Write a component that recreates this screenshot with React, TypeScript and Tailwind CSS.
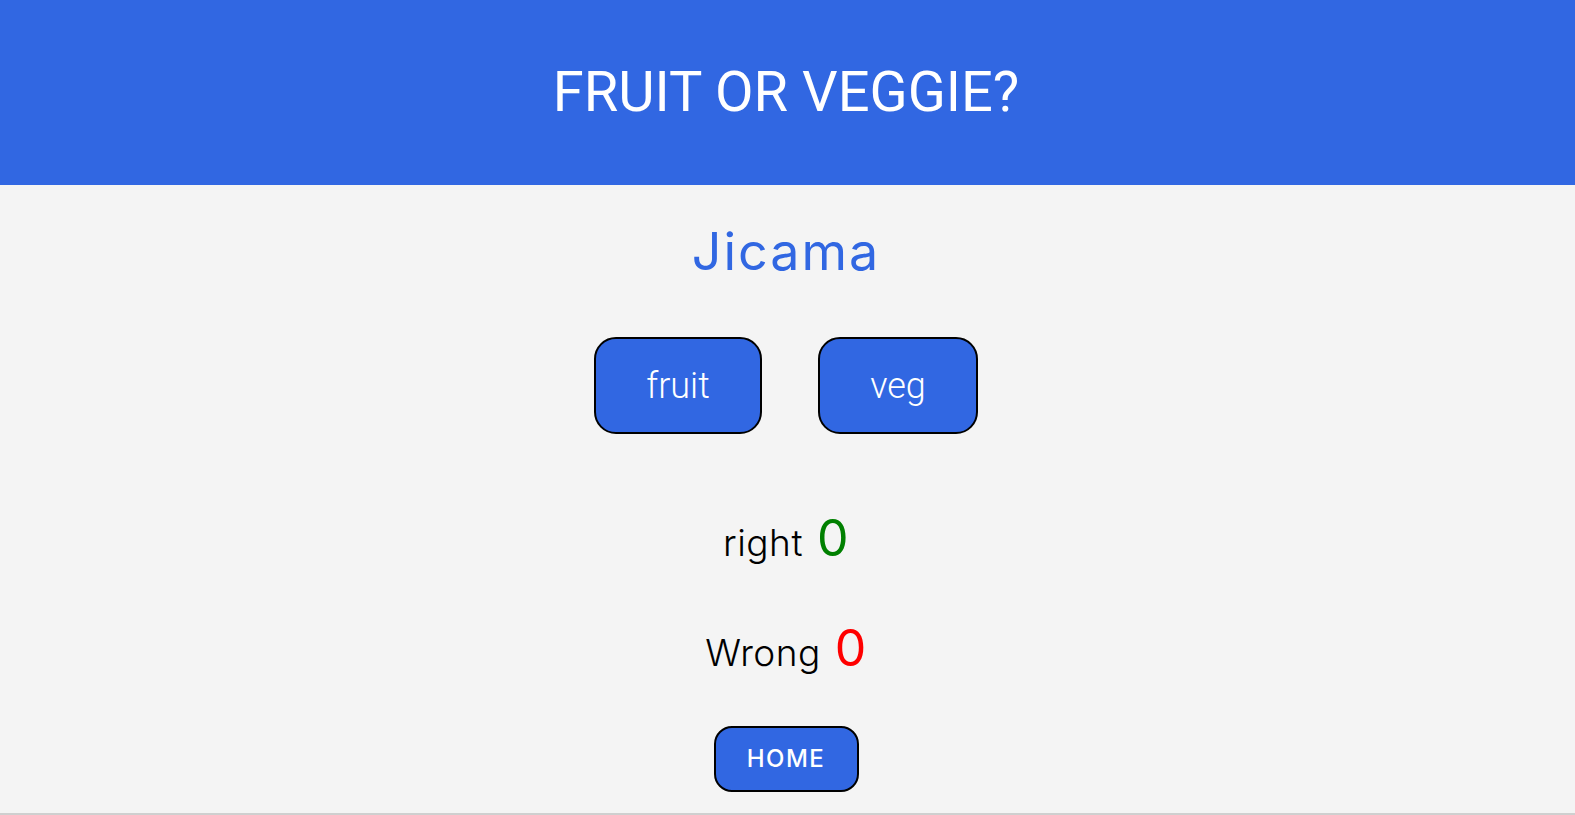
export default function App() {
  return (
    <div className="min-h-[815px] bg-[#f4f4f4] flex flex-col">
      {/* HEADER */}
      <header className="h-[185px] bg-[#3167e2] flex items-center justify-center pr-[3px]">
        <h1 className="text-white text-[56px] font-normal font-['Roboto',sans-serif] leading-none pb-[2px]">
          FRUIT OR VEGGIE?
        </h1>
      </header>

      {/* GAME */}
      <main className="flex-1 flex flex-col items-center pr-[3px] font-['Inter',sans-serif]">
        <h2 className="mt-[36px] text-[#3167e2] text-[52px] leading-[62px] font-normal tracking-[2px]">Jicama</h2>

        <div className="mt-[54px] flex gap-[56px]">
          <button className="h-[97px] w-[168px] rounded-[22px] border-2 border-black bg-[#3167e2] text-white text-[36px] font-light font-['Roboto',sans-serif]">
            fruit
          </button>
          <button className="h-[97px] w-[160px] rounded-[22px] border-2 border-black bg-[#3167e2] text-white text-[36px] font-light font-['Roboto',sans-serif]">
            veg
          </button>
        </div>

        <p className="mt-[67px] h-[60px] flex items-baseline gap-[14px] text-[37px] font-light tracking-[0.5px] text-black">
          right <span className="text-[50px] font-normal text-[#008000]">0</span>
        </p>

        <p className="mt-[50px] h-[60px] flex items-baseline gap-[14px] text-[37px] font-light tracking-[0.5px] text-black">
          Wrong <span className="text-[50px] font-normal text-[#ff0000]">0</span>
        </p>

        <button className="mt-[55px] h-[66px] w-[145px] rounded-[18px] border-2 border-black bg-[#3167e2] text-white text-[24px] font-medium tracking-[1.5px]">
          HOME
        </button>
      </main>

      <div className="h-[2px] bg-[#cfcfcf]" />
    </div>
  );
}
